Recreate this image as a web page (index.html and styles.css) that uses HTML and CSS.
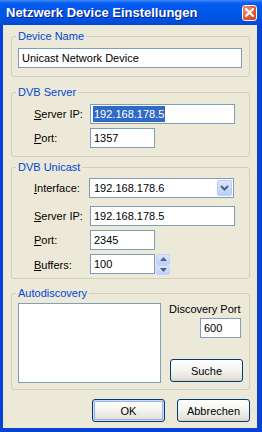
FILE: index.html
```html
<!DOCTYPE html>
<html lang='de'>
<head>
    <meta charset='UTF-8'>
    <title>Netzwerk Device Einstellungen</title>

    <link rel="stylesheet" href="styles.css">
</head>
<body>

<div class='window'>
    <div class='titlebar'>
        <span class='title'>Netzwerk Device Einstellungen</span>
        <span class='close-btn'>
            <svg width='9' height='9' viewBox='0 0 9 9'><path d='M1 1 L8 8 M8 1 L1 8' stroke='#fff' stroke-width='2' stroke-linecap='square'/></svg>
        </span>
    </div>

    <div class='client'>
        <fieldset class='group group-name'>
            <legend>Device Name</legend>
            <div class='field field-name'>Unicast Network Device</div>
        </fieldset>

        <fieldset class='group group-server'>
            <legend>DVB Server</legend>
            <div class='form-grid'>
                <label><u>S</u>erver IP:</label>
                <div class='field field-ip'><span class='selected'>192.168.178.5</span></div>
                <label><u>P</u>ort:</label>
                <div class='field field-short'>1357</div>
            </div>
        </fieldset>

        <fieldset class='group group-unicast'>
            <legend>DVB Unicast</legend>
            <div class='form-grid'>
                <label><u>I</u>nterface:</label>
                <div class='combo'>
                    <span class='combo-text'>192.168.178.6</span>
                    <span class='combo-btn'>
                        <svg width='9' height='6' viewBox='0 0 9 6'><path d='M1 1 L4.5 4.5 L8 1' fill='none' stroke='#4D6185' stroke-width='2'/></svg>
                    </span>
                </div>
                <label class='row-gap'><u>S</u>erver IP:</label>
                <div class='field field-ip row-gap'>192.168.178.5</div>
                <label><u>P</u>ort:</label>
                <div class='field field-short'>2345</div>
                <label><u>B</u>uffers:</label>
                <div class='spin-row'>
                    <div class='field field-short'>100</div>
                    <div class='spin'>
                        <span class='spin-btn'><svg width='7' height='4' viewBox='0 0 7 4'><path d='M0 4 L3.5 0 L7 4 Z' fill='#4D6185'/></svg></span>
                        <span class='spin-btn'><svg width='7' height='4' viewBox='0 0 7 4'><path d='M0 0 L3.5 4 L7 0 Z' fill='#4D6185'/></svg></span>
                    </div>
                </div>
            </div>
        </fieldset>

        <fieldset class='group group-auto'>
            <legend>Autodiscovery</legend>
            <div class='auto-wrap'>
                <div class='listbox'></div>
                <div class='auto-side'>
                    <span class='side-label'>Discovery Port</span>
                    <div class='field field-port'>600</div>
                    <div class='btn btn-search'>Suche</div>
                </div>
            </div>
        </fieldset>

        <div class='dialog-buttons'>
            <div class='btn btn-default'>OK</div>
            <div class='btn'>Abbrechen</div>
        </div>
    </div>
</div>

</body>
</html>
```

FILE: styles.css
```css
body {
    margin: 0;
    font-family: "Liberation Sans", Arial, sans-serif;
    font-size: 11px;
    color: #000;
}

.window {
    width: 262px;
    height: 432px;
    display: flex;
    flex-direction: column;
    background: #0842D4;
}

/* title bar */
.titlebar {
    height: 25px;
    flex: none;
    display: flex;
    align-items: center;
    background: linear-gradient(#3D8CF8 0, #0A5CF0 3px, #0058EE 7px, #0055E5 16px, #0049D6 25px);
}

.title {
    padding-left: 6px;
    color: #fff;
    font-weight: bold;
    font-size: 13px;
    text-shadow: 1px 1px #0A1A86;
}

.close-btn {
    margin-left: auto;
    margin-right: 5px;
    width: 13px;
    height: 14px;
    display: flex;
    align-items: center;
    justify-content: center;
    border: 1px solid #fff;
    border-radius: 3px;
    background: radial-gradient(circle at 30% 30%, #F09A7C, #E2552D 60%, #C8411C);
}

/* client area */
.client {
    flex: 1;
    margin: 0 5px 4px 3px;
    padding: 5px 7px 0 8px;
    background: #ECE9D8;
    display: flex;
    flex-direction: column;
}

.group {
    margin: 0;
    min-width: 0;
    border: 1px solid #D0D0BF;
    border-radius: 3px;
    padding: 5px 6px 8px 6px;
}

.group legend {
    color: #0046D5;
    line-height: 13px;
    padding: 0 2px;
    margin-left: -2px;
}

.group-server {
    margin-top: 9px;
}

.group-unicast {
    margin-top: 4px;
    padding-top: 4px;
    padding-bottom: 3px;
}

.group-auto {
    margin-top: 8px;
    padding-top: 3px;
    padding-bottom: 6px;
}

/* fields */
.field {
    box-sizing: border-box;
    height: 20px;
    line-height: 18px;
    padding-left: 3px;
    border: 1px solid #7F9DB9;
    background: #fff;
    white-space: nowrap;
}

.field-name {
    width: 224px;
}

.field-ip {
    width: 145px;
}

.field-short {
    width: 65px;
}

.field-port {
    width: 41px;
    margin-left: 31px;
    margin-top: 2px;
}

.selected {
    background: #316AC5;
    color: #fff;
    margin-left: -1px;
    padding: 2px 1px;
}

.form-grid {
    display: grid;
    grid-template-columns: 72px auto;
    row-gap: 4px;
    align-items: center;
}

.form-grid label {
    padding-left: 16px;
}

.form-grid .row-gap {
    margin-top: 4px;
}

/* combo box */
.combo {
    box-sizing: border-box;
    width: 145px;
    height: 20px;
    margin-left: -1px;
    padding: 1px;
    border: 1px solid #7F9DB9;
    background: #fff;
    display: flex;
    align-items: center;
}

.combo-text {
    flex: 1;
    padding-left: 3px;
}

.combo-btn {
    box-sizing: border-box;
    width: 15px;
    height: 16px;
    display: flex;
    align-items: center;
    justify-content: center;
    border: 1px solid #B9CAF3;
    border-radius: 2px;
    background: linear-gradient(#DCE6FD, #BCCFF9);
}

/* spinner */
.spin-row {
    display: flex;
    gap: 1px;
}

.spin {
    display: flex;
    flex-direction: column;
    height: 21px;
    width: 14px;
}

.spin-btn {
    box-sizing: border-box;
    flex: 1;
    display: flex;
    align-items: center;
    justify-content: center;
    border: 1px solid #C4D3F5;
    border-radius: 2px;
    background: linear-gradient(#DCE6FD, #BCCFF9);
}

/* autodiscovery */
.auto-wrap {
    display: flex;
    gap: 8px;
}

.listbox {
    width: 144px;
    height: 80px;
    box-sizing: border-box;
    border: 1px solid #7F9DB9;
    background: #fff;
}

.auto-side {
    display: flex;
    flex-direction: column;
}

.side-label {
    line-height: 13px;
}

.btn-search {
    margin-top: 21px;
    margin-left: 1px;
    height: 22px;
}

/* buttons */
.btn {
    box-sizing: border-box;
    width: 73px;
    height: 23px;
    display: flex;
    align-items: center;
    justify-content: center;
    border: 1px solid #003C74;
    border-radius: 3px;
    background: linear-gradient(#FFFFFF, #F3F3EF 50%, #E6E4DA 85%, #D6D0C5);
}

.btn-default {
    box-shadow: inset 0 0 0 1px #CEDCF7, inset 0 0 0 2px #95B3EC;
}

.dialog-buttons {
    margin-top: 9px;
    display: flex;
    justify-content: flex-end;
    gap: 12px;
}
```
